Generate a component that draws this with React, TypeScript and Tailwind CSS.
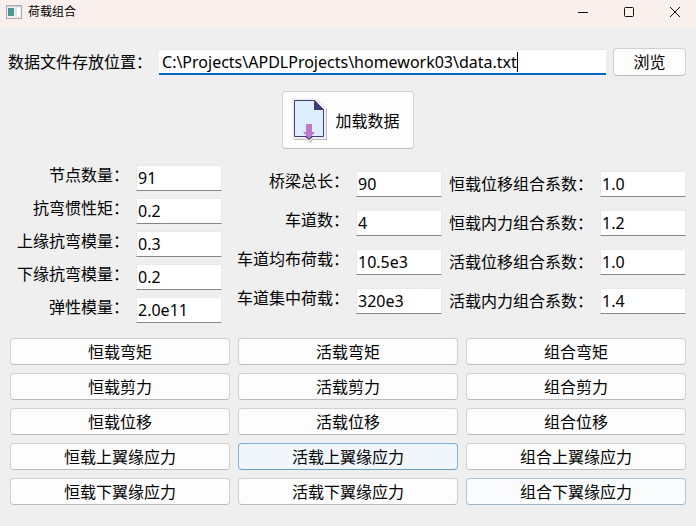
import { useState } from "react";

type Field = { id: string; label: string; value: string };

const sectionFields: Field[] = [
  { id: "nodes", label: "节点数量：", value: "91" },
  { id: "inertia", label: "抗弯惯性矩：", value: "0.2" },
  { id: "upper-modulus", label: "上缘抗弯模量：", value: "0.3" },
  { id: "lower-modulus", label: "下缘抗弯模量：", value: "0.2" },
  { id: "elastic", label: "弹性模量：", value: "2.0e11" },
];

const bridgeFields: Field[] = [
  { id: "length", label: "桥梁总长：", value: "90" },
  { id: "lanes", label: "车道数：", value: "4" },
  { id: "uniform", label: "车道均布荷载：", value: "10.5e3" },
  { id: "concentrated", label: "车道集中荷载：", value: "320e3" },
];

const factorFields: Field[] = [
  { id: "dead-disp", label: "恒载位移组合系数：", value: "1.0" },
  { id: "dead-force", label: "恒载内力组合系数：", value: "1.2" },
  { id: "live-disp", label: "活载位移组合系数：", value: "1.0" },
  { id: "live-force", label: "活载内力组合系数：", value: "1.4" },
];

const loads = ["恒载", "活载", "组合"];
const results = ["弯矩", "剪力", "位移", "上翼缘应力", "下翼缘应力"];

const plain = "border-[#d0d0d0] border-b-[#bababa] bg-[#fdfdfd]";
const hovered = "border-[#7fb0d8] border-b-[#6f9cc0] bg-[#f0f6fb]";
const fading = "border-[#afc6d9] border-b-[#9fb4c5] bg-[#f9fbfd]";

function tone(name: string) {
  if (name === "活载上翼缘应力") return hovered;
  if (name === "组合下翼缘应力") return fading;
  return plain;
}

function FieldRow({ field, labelClass }: { field: Field; labelClass: string }) {
  return (
    <>
      <label htmlFor={field.id} className={`text-right whitespace-nowrap ${labelClass}`}>
        {field.label}
      </label>
      <input
        id={field.id}
        defaultValue={field.value}
        className="h-[26px] w-full min-w-0 border border-[#e9e9e9] border-b-[#868686] bg-white px-px outline-none"
      />
    </>
  );
}

function TitleBar() {
  return (
    <header className="flex h-7 items-center bg-[#f9f0ee] pb-1 pl-1.5 text-xs">
      <svg width="16" height="14" viewBox="0 0 16 14" aria-hidden="true">
        <defs>
          <linearGradient id="pane" x1="0" y1="0" x2="1" y2="1">
            <stop offset="0" stopColor="#4a86a8" />
            <stop offset="1" stopColor="#4fa87a" />
          </linearGradient>
        </defs>
        <rect x="0.5" y="0.5" width="15" height="13" fill="#eef0f2" stroke="#a9adb3" />
        <rect x="1" y="1" width="14" height="1" fill="#c9ced6" />
        <rect x="2" y="3" width="6" height="8" fill="url(#pane)" />
        <rect x="9" y="3" width="2" height="8" fill="#dfe3e6" />
        <rect x="11" y="3" width="3" height="8" fill="#ffffff" />
      </svg>
      <h1 className="ml-1.5 grow">荷载组合</h1>
      <div className="-mr-0.5 flex">
        <button aria-label="最小化" className="grid h-6 w-[46px] place-items-center">
          <svg width="12" height="12" viewBox="0 0 12 12" fill="none" stroke="#111" aria-hidden="true">
            <path d="M1 6.5h10" />
          </svg>
        </button>
        <button aria-label="最大化" className="grid h-6 w-[46px] place-items-center">
          <svg width="12" height="12" viewBox="0 0 12 12" fill="none" stroke="#111" aria-hidden="true">
            <rect x="1.5" y="1.5" width="9" height="9" rx="1" />
          </svg>
        </button>
        <button aria-label="关闭" className="grid h-6 w-[46px] place-items-center">
          <svg width="12" height="12" viewBox="0 0 12 12" fill="none" stroke="#111" aria-hidden="true">
            <path d="M1 1l10 10M11 1L1 11" />
          </svg>
        </button>
      </div>
    </header>
  );
}

function FileIcon() {
  return (
    <svg width="36" height="46" viewBox="0 0 36 46" aria-hidden="true">
      <path d="M2 2H25L35 12V43H21L18 46L14 43H2Z" fill="#bcbcbf" />
      <path d="M0 1H24L34 10V42H20L17 45L13 42H0Z" fill="#f1eff2" />
      <path d="M2.500 3.500H22.500L31.500 12.500V39.500H2.500Z" fill="#dceeff" stroke="#443b72" />
      <path d="M22 3L32 13H22Z" fill="#443b72" />
      <path d="M12 39h10l-5 4z" fill="#443b72" />
      <path d="M14 27h6v8h3l-6 7l-6-7h3z" fill="#c078cc" />
    </svg>
  );
}

export default function App() {
  const [path, setPath] = useState("C:\\Projects\\APDLProjects\\homework03\\data.txt");

  return (
    <div className="min-h-screen bg-[#efefef] font-['Noto_Sans','Noto_Sans_CJK_SC',sans-serif] text-base leading-6 text-black">
      <TitleBar />
      <main className="pt-5 pb-5">
        <div className="flex items-center gap-[7px] pr-2.5 pl-2">
          <label htmlFor="path" className="whitespace-nowrap">
            数据文件存放位置：
          </label>
          <div className="flex h-[26px] min-w-0 grow items-center border-t border-b-2 border-t-[#e5e5e5] border-b-[#0067c0] bg-white pl-[3px]">
            <input
              id="path"
              value={path}
              onChange={(e) => setPath(e.target.value)}
              className="field-sizing-content h-[22px] min-w-0 bg-transparent caret-transparent outline-none"
            />
            <span className="h-5 w-px bg-black" aria-hidden="true" />
          </div>
          <button className={`h-7 w-[73px] rounded border ${plain}`}>浏览</button>
        </div>

        <div className="mt-[15px] flex justify-center">
          <button className={`flex h-[58px] items-center gap-[7px] rounded border pr-[13px] pl-[9px] ${plain}`}>
            <FileIcon />
            <span className="pt-0.5">加载数据</span>
          </button>
        </div>

        <div className="mt-4 flex items-start px-2.5">
          <div className="grid grow grid-cols-[max-content_minmax(86px,1fr)] gap-[7px] pl-[7px]">
            {sectionFields.map((f) => (
              <FieldRow key={f.id} field={f} labelClass="leading-5" />
            ))}
          </div>
          <div className="mt-1.5 ml-[15px] grid grow grid-cols-[max-content_minmax(86px,1fr)] gap-x-[7px] gap-y-[13px]">
            {bridgeFields.map((f) => (
              <FieldRow key={f.id} field={f} labelClass="leading-5" />
            ))}
          </div>
          <div className="mt-1.5 ml-[7px] grid grow grid-cols-[max-content_minmax(86px,1fr)] gap-x-[7px] gap-y-[13px]">
            {factorFields.map((f) => (
              <FieldRow key={f.id} field={f} labelClass="leading-[26px]" />
            ))}
          </div>
        </div>

        <div className="mt-[15px] grid grid-cols-3 gap-2 px-2.5">
          {results.map((result) =>
            loads.map((load) => (
              <button
                key={load + result}
                className={`flex h-[27px] items-center justify-center rounded border ${tone(load + result)}`}
              >
                {load + result}
              </button>
            )),
          )}
        </div>
      </main>
    </div>
  );
}
